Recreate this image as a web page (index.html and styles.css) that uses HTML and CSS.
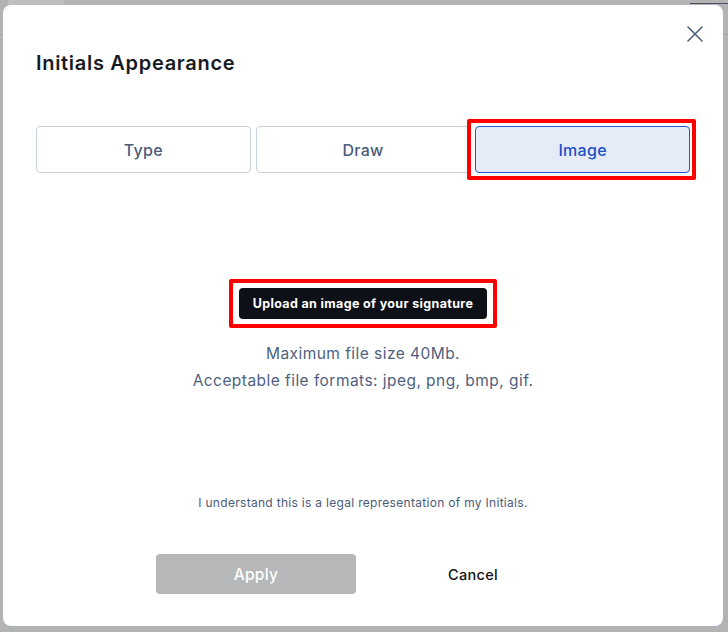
FILE: index.html
```html
<!DOCTYPE html>
<html lang="en">
<head>
    <meta charset="UTF-8">
    <title>Initials Appearance</title>
    <link rel="stylesheet" href="styles.css">
</head>
<body>
<!-- 弹窗 -->
<div class="modal">
    <button class="modal-close" type="button" aria-label="Close">
        <svg width="16" height="16" viewBox="0 0 16 16">
            <path d="M1 1 L15 15 M15 1 L1 15" stroke="#4b5b7a" stroke-width="1.5" stroke-linecap="round" fill="none"/>
        </svg>
    </button>

    <h2 class="modal-title">Initials Appearance</h2>

    <!-- 选项卡 -->
    <div class="tabs">
        <button class="tab" type="button">Type</button>
        <button class="tab" type="button">Draw</button>
        <button class="tab tab-active mark mark-tab" type="button">Image</button>
    </div>

    <!-- 上传区域 -->
    <div class="upload">
        <button class="upload-btn mark mark-upload" type="button">Upload an image of your signature</button>
        <p class="upload-note">Maximum file size 40Mb.</p>
        <p class="upload-note">Acceptable file formats: jpeg, png, bmp, gif.</p>
    </div>

    <p class="legal">I understand this is a legal representation of my Initials.</p>

    <div class="actions">
        <button class="btn-apply" type="button" disabled>Apply</button>
        <button class="btn-cancel" type="button">Cancel</button>
    </div>
</div>
</body>
</html>
```

FILE: styles.css
```css
* {
    margin: 0;
    padding: 0;
    box-sizing: border-box;
}

body {
    height: 632px;
    overflow: hidden;
    font-family: "Inter", "Liberation Sans", sans-serif;
    /*遮罩层下面的页面*/
    background:
        linear-gradient(#9aa3b2, #9aa3b2) 0 34px / 100% 1px no-repeat,
        linear-gradient(#bebebe, #bebebe) 8px 0 / 56px 5px no-repeat,
        linear-gradient(#4a5060, #4a5060) 690px 3px / 38px 1px no-repeat,
        #b3b3b3;
}

button {
    font-family: inherit;
    border: none;
    background: none;
    cursor: pointer;
}

/*弹窗*/
.modal {
    position: relative;
    width: 720px;
    height: 621px;
    margin: 5px 0 0 3px;
    padding: 45px 33px 0;
    background-color: #fff;
    border-radius: 8px;
    box-shadow: 0 1px 0 #a9b3c4;
    display: flex;
    flex-direction: column;
}

.modal-close {
    position: absolute;
    top: 21px;
    right: 20px;
    width: 16px;
    height: 16px;
    display: flex;
}

.modal-title {
    font-size: 20px;
    font-weight: 600;
    color: #161b26;
    line-height: 26px;
    letter-spacing: 0.7px;
}

/*选项卡*/
.tabs {
    display: flex;
    gap: 5px;
    margin-top: 50px;
}

.tab {
    width: 215px;
    height: 47px;
    border: 1px solid #c7d1e1;
    border-radius: 4px;
    font-size: 16px;
    font-weight: 500;
    color: #4b5b7a;
    background-color: #fff;
    letter-spacing: 0.3px;
}

.tab-active {
    border-color: #1d57d4;
    background-color: #e5ecf8;
    color: #1b4fc6;
}

/*红色标注框，盖在元素上面*/
.mark {
    position: relative;
}

.mark::after {
    content: "";
    position: absolute;
    border: 4px solid #ff0000;
    border-radius: 2px;
    pointer-events: none;
}

.mark-tab::after {
    top: -8px;
    bottom: -8px;
    left: -9px;
    right: -7px;
}

.mark-upload::after {
    top: -9px;
    bottom: -9px;
    left: -10px;
    right: -10px;
}

/*上传*/
.upload {
    display: flex;
    flex-direction: column;
    align-items: center;
    margin-top: 115px;
}

.upload-btn {
    width: 248px;
    height: 31px;
    background-color: #0d1016;
    color: #fff;
    font-size: 12.5px;
    font-weight: 700;
    border-radius: 4px;
    letter-spacing: 0.35px;
    display: block;
}

.upload-note {
    font-size: 15.5px;
    color: #4f5f80;
    line-height: 27px;
    letter-spacing: 0.45px;
}

.upload-note:first-of-type {
    margin-top: 21px;
}

.legal {
    margin-top: 100px;
    text-align: center;
    font-size: 12px;
    color: #4b5b7a;
    line-height: 18px;
    letter-spacing: 0.3px;
}

.actions {
    display: flex;
    align-items: center;
    margin-top: 42px;
    padding-left: 120px;
}

.btn-apply {
    width: 200px;
    height: 40px;
    border-radius: 4px;
    background-color: #b6b7b9;
    color: #fff;
    font-size: 15.5px;
    font-weight: 500;
    cursor: default;
    letter-spacing: 0.3px;
}

.btn-cancel {
    margin-left: 72px;
    width: 90px;
    height: 40px;
    font-size: 14.5px;
    font-weight: 500;
    color: #111;
    letter-spacing: 0.3px;
}
```
